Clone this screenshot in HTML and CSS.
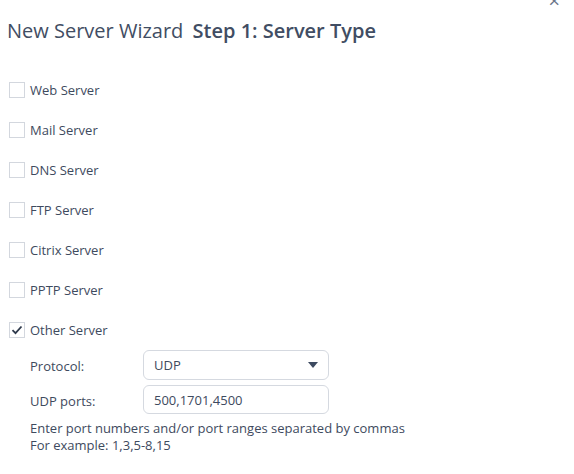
FILE: index.html
```html
<!DOCTYPE html>
<html>
<head>
<meta charset="utf-8">
<link rel="stylesheet" href="styles.css">
</head>
<body>
<div class="dialog">
  <button class="close" aria-label="Close">×</button>
  <h1 class="title">New Server Wizard <b>Step 1: Server Type</b></h1>
  <div class="list">
    <label class="row"><span class="box"></span>Web Server</label>
    <label class="row"><span class="box"></span>Mail Server</label>
    <label class="row"><span class="box"></span>DNS Server</label>
    <label class="row"><span class="box"></span>FTP Server</label>
    <label class="row"><span class="box"></span>Citrix Server</label>
    <label class="row"><span class="box"></span>PPTP Server</label>
    <label class="row"><span class="box checked"><svg width="12" height="10" viewBox="0 0 12 10"><path d="M1.5 5.2 L4.5 8.2 L10.5 1.5" fill="none" stroke="#2f3a4c" stroke-width="1.8"/></svg></span>Other Server</label>
  </div>
  <div class="details">
    <div class="field">
      <span class="flabel">Protocol:</span>
      <div class="select">UDP<svg width="10" height="6" viewBox="0 0 10 6"><path d="M0 0 H10 L5 6 Z" fill="#3d4a60"/></svg></div>
    </div>
    <div class="field">
      <span class="flabel">UDP ports:</span>
      <div class="input">500,1701,4500</div>
    </div>
    <p class="help">Enter port numbers and/or port ranges separated by commas<br>For example: 1,3,5-8,15</p>
  </div>
</div>
</body>
</html>
```
FILE: styles.css
```css
html, body {
  margin: 0;
  background: #fff;
}
body {
  font-family: "Open Sans", "Noto Sans", sans-serif;
  color: #3e4a5e;
}
.dialog {
  position: relative;
  width: 574px;
  height: 474px;
  overflow: hidden;
}
.close {
  position: absolute;
  top: -9px;
  right: 14px;
  border: 0;
  background: none;
  padding: 0;
  font-family: "Open Sans", sans-serif;
  font-size: 20px;
  line-height: 20px;
  color: #6b7588;
}
.title {
  margin: 0;
  padding: 18px 0 0 7px;
  font-size: 20px;
  line-height: 26px;
  font-weight: 400;
  color: #414d63;
}
.title b {
  font-weight: 600;
  margin-left: 4px;
}
.list {
  display: flex;
  flex-direction: column;
  gap: 22px;
  padding: 37px 0 0 9px;
}
.row {
  display: flex;
  align-items: center;
  gap: 5px;
  font-size: 13px;
  line-height: 18px;
  height: 18px;
}
.box {
  width: 14px;
  height: 14px;
  border: 1px solid #d3d7de;
  display: flex;
  align-items: center;
  justify-content: center;
}
.details {
  padding: 11px 0 0 30px;
}
.field {
  display: flex;
  align-items: center;
  margin-bottom: 5px;
}
.flabel {
  width: 113px;
  font-size: 13px;
  padding-top: 2px;
}
.select, .input {
  box-sizing: border-box;
  width: 186px;
  height: 30px;
  border: 1px solid #d5d9e0;
  border-radius: 6px;
  padding: 0 10px;
  font-size: 13px;
  display: flex;
  align-items: center;
}
.select {
  justify-content: space-between;
}
.input {
  height: 29px;
}
.help {
  margin: 6px 0 0;
  font-size: 13px;
  line-height: 17px;
}
```
